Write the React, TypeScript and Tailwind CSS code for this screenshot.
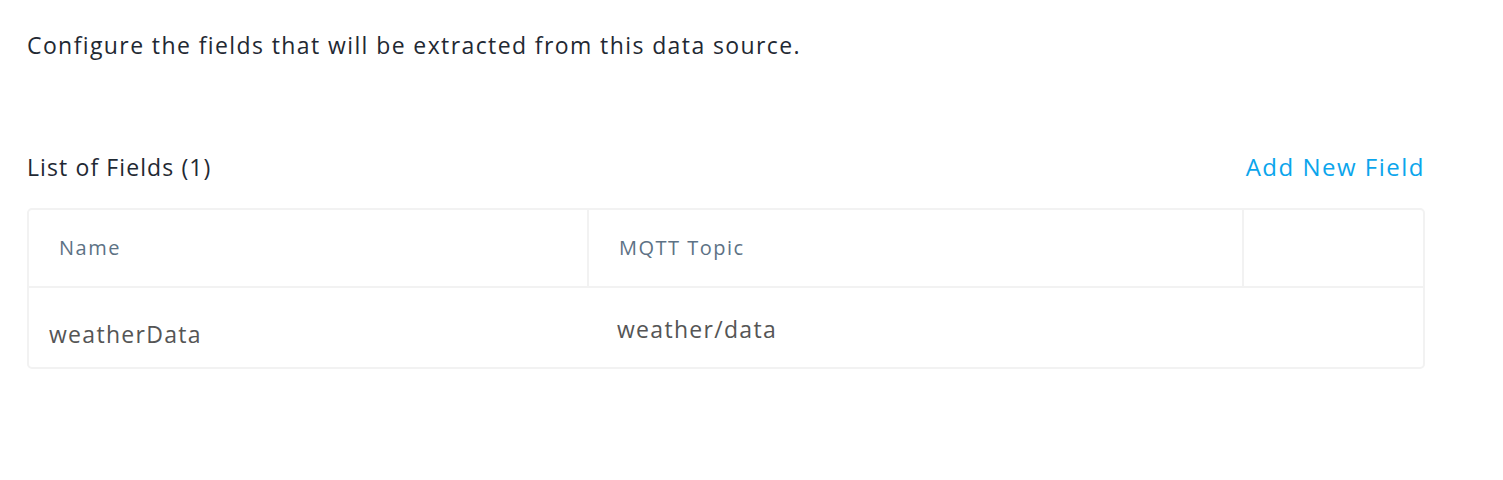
export default function App() {
  return (
    <div className="min-h-[480px] bg-white pl-[27px] pr-[78px] pt-[29px] font-['Open_Sans',sans-serif]">
      <p className="text-[23px] leading-[32px] tracking-[1.4px] text-[#1f2933]">
        Configure the fields that will be extracted from this data source.
      </p>

      <div className="mt-[90px] flex items-center justify-between">
        <h2 className="text-[23px] leading-[32px] tracking-[1.1px] text-[#1f2933]">List of Fields (1)</h2>
        <button className="text-[24px] leading-[32px] tracking-[1.5px] text-[#0ba5ec]">Add New Field</button>
      </div>

      <div className="mt-[25px] rounded-[5px] border-2 border-[#f2f2f2]">
        <div className="flex h-[78px] border-b-2 border-[#f2f2f2]">
          <div className="flex w-[560px] items-center border-r-2 border-[#f2f2f2] pl-[30px] text-[20px] tracking-[1.5px] text-[#5d7285]">
            Name
          </div>
          <div className="flex w-[655px] items-center border-r-2 border-[#f2f2f2] pl-[30px] text-[20px] tracking-[1.5px] text-[#5d7285]">
            MQTT Topic
          </div>
          <div className="flex-1" />
        </div>
        <div className="flex h-[79px] text-[23px] tracking-[1.3px] text-[#555555]">
          <div className="w-[560px] pl-[20px] pt-[29px]">weatherData</div>
          <div className="pl-[28px] pt-[24px]">weather/data</div>
        </div>
      </div>
    </div>
  );
}
